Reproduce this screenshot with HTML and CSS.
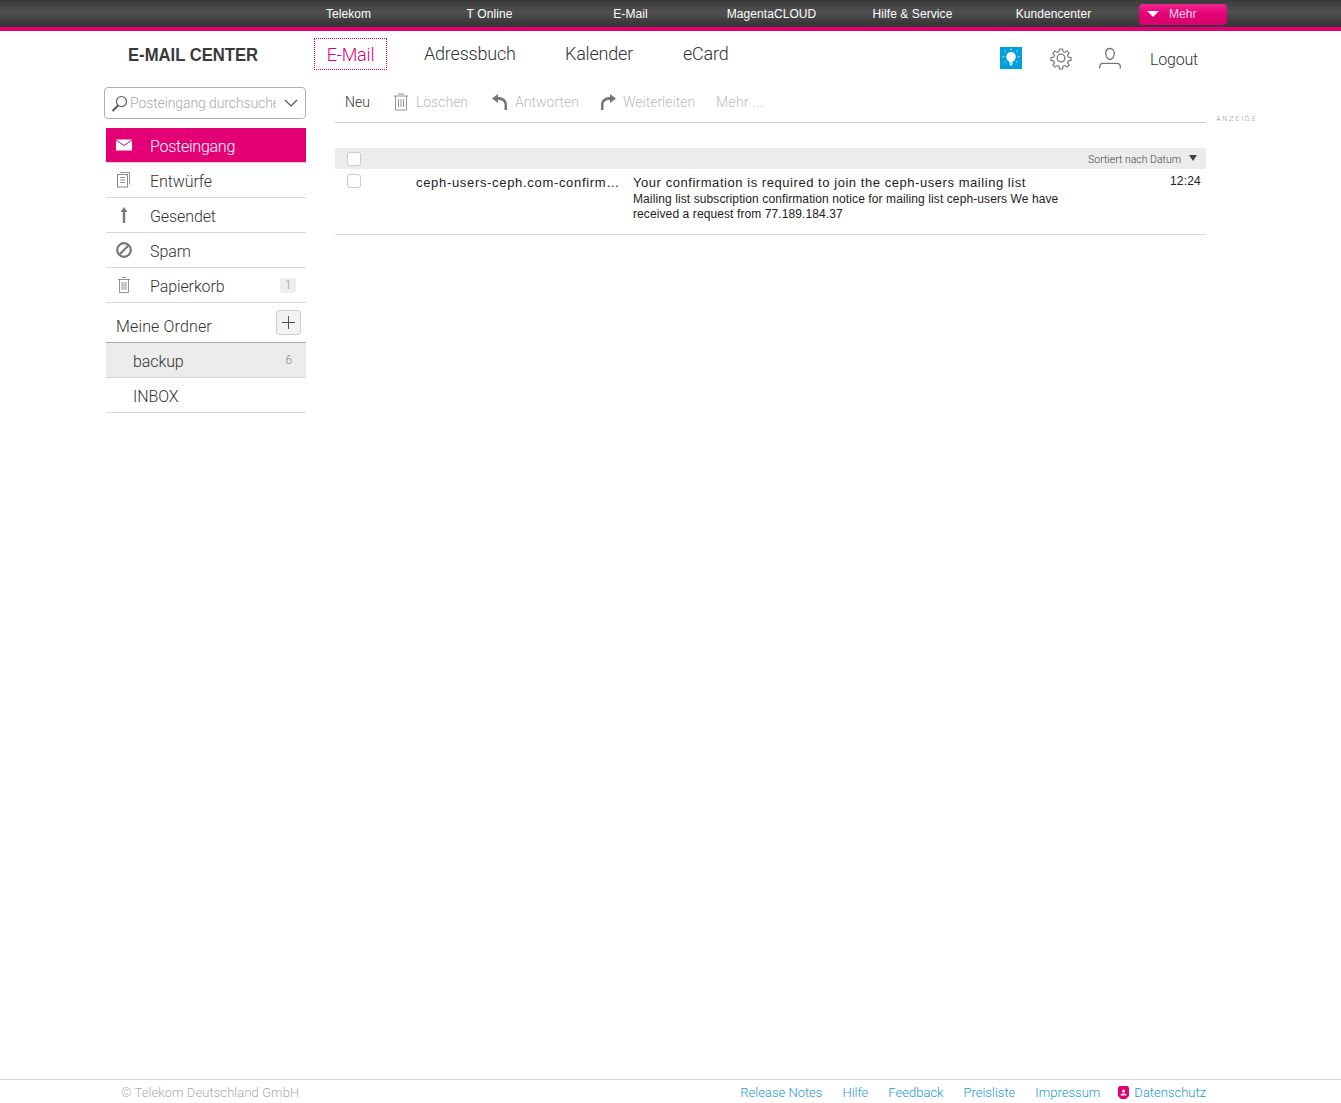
FILE: index.html
```html
<!DOCTYPE html>
<html lang="de">
<head>
  <meta charset="UTF-8" />
  <title>E-Mail Center</title>
  <link rel="stylesheet" href="styles.css">
</head>
<body>
  <div class="topbar">
    <a class="topbar-link">Telekom</a>
    <a class="topbar-link">T Online</a>
    <a class="topbar-link">E-Mail</a>
    <a class="topbar-link">MagentaCLOUD</a>
    <a class="topbar-link">Hilfe &amp; Service</a>
    <a class="topbar-link">Kundencenter</a>
    <a class="more-btn"><span class="more-arrow"></span>Mehr</a>
  </div>

  <div class="header">
    <div class="brand">E-MAIL CENTER</div>
    <nav class="tabs">
      <a class="tab tab-active">E-Mail</a>
      <a class="tab tab-book">Adressbuch</a>
      <a class="tab tab-cal">Kalender</a>
      <a class="tab tab-card">eCard</a>
    </nav>
    <div class="header-tools">
      <span class="tip-icon">
        <svg width="22" height="22" viewBox="0 0 22 22">
          <rect width="22" height="22" fill="#00a0de"/>
          <circle cx="11" cy="9.800" r="4.800" fill="#fff"/>
          <path d="M8.500 13h5l-.8 2.500H9.300z" fill="#fff"/>
          <path d="M9.300 16.200h3.400M9.700 17.400h2.600M10.300 18.600h1.400" stroke="#fff" stroke-width="0.9"/>
          <path d="M11 1.500v1.800M4.500 3.500l1.300 1.300M17.500 3.500l-1.300 1.300M2.500 9.800h1.800M17.700 9.800h1.800M4.700 15.500l1.200-1M17.300 15.500l-1.200-1" stroke="#fff" stroke-width="0.8"/>
        </svg>
      </span>
      <svg class="gear-icon" width="24" height="24" viewBox="0 0 24 24" fill="none" stroke="#777" stroke-width="1.300">
        <circle cx="12" cy="12" r="3.800"/>
        <path d="M10.300 2h3.400l.6 3 1.900.8 2.500-1.700 2.300 2.400-1.700 2.500.8 1.900 3 .6v3.200l-3 .6-.8 1.900 1.700 2.500-2.300 2.400-2.500-1.700-1.900.8-.6 3h-3.400l-.6-3-1.900-.8-2.500 1.700-2.300-2.400 1.700-2.500-.8-1.900-3-.6v-3.200l3-.6.8-1.900-1.700-2.500 2.300-2.400 2.500 1.700 1.900-.8z" transform="translate(1.200 1.200) scale(.9)"/>
      </svg>
      <svg class="user-icon" width="24" height="24" viewBox="0 0 24 24" fill="none" stroke="#777" stroke-width="1.300">
        <path d="M12 2.500c-2.800 0-4.300 2-4.300 4.600 0 3 1.600 6.400 4.300 6.400s4.300-3.400 4.300-6.400c0-2.600-1.500-4.600-4.300-4.600z"/>
        <path d="M1.700 22.500v-2c0-2 1.300-3.200 3.500-3.200h13.600c2.200 0 3.500 1.200 3.500 3.200v2"/>
      </svg>
      <a class="logout">Logout</a>
    </div>
  </div>

  <div class="content">
    <aside class="sidebar">
      <div class="search">
        <svg class="search-icon" width="17" height="17" viewBox="0 0 17 17" fill="none" stroke="#555">
          <circle cx="10.500" cy="6.500" r="5" stroke-width="1.100"/>
          <path d="M7 10.500 1.500 16" stroke-width="1.900"/>
        </svg>
        <input class="search-text" type="text" placeholder="Posteingang durchsuchen" />
        <svg class="search-caret" width="14" height="8" viewBox="0 0 14 8" fill="none" stroke="#555" stroke-width="1.200">
          <path d="M1 1l6 6 6-6"/>
        </svg>
      </div>
      <ul class="folders">
        <li class="folder folder-active">
          <svg class="folder-icon" width="18" height="12" viewBox="0 0 18 12">
            <rect x="1" y="0.500" width="16" height="11" fill="#fff"/>
            <path d="M1 1l8 5.500L17 1" fill="none" stroke="#e20074" stroke-width="1"/>
          </svg>
          Posteingang
        </li>
        <li class="folder">
          <svg class="folder-icon" width="18" height="18" viewBox="0 0 18 18" fill="none" stroke="#888">
            <rect x="2.500" y="3.500" width="10" height="12.500" fill="#fff"/>
            <path d="M5 1.500h9.500v12M5 6.500h5M5 9h5M5 11.500h5" stroke-width="0.900"/>
          </svg>
          Entwürfe
        </li>
        <li class="folder">
          <svg class="folder-icon" width="18" height="18" viewBox="0 0 18 18" fill="#777">
            <path d="M9 1l3.500 5h-2.300v11H7.800V6H5.500z"/>
          </svg>
          Gesendet
        </li>
        <li class="folder">
          <svg class="folder-icon" width="18" height="18" viewBox="0 0 18 18" fill="none" stroke="#777" stroke-width="2.200">
            <circle cx="9" cy="9" r="6.800"/>
            <path d="M4.500 13.500l9-9"/>
          </svg>
          Spam
        </li>
        <li class="folder">
          <svg class="folder-icon" width="18" height="18" viewBox="0 0 18 18" fill="none" stroke="#888" stroke-width="0.900">
            <path d="M3 3.500h12M7 1.500h4M4.500 3.500v13h9v-13M7 6v8M9 6v8M11 6v8"/>
          </svg>
          Papierkorb
          <span class="badge">1</span>
        </li>
      </ul>
      <div class="my-folders">
        Meine Ordner
        <span class="add-btn">
          <svg width="13" height="13" viewBox="0 0 13 13" stroke="#555" stroke-width="1"><path d="M6.500 0v13M0 6.500h13"/></svg>
        </span>
      </div>
      <ul class="folders">
        <li class="folder folder-sub folder-selected">backup<span class="count">6</span></li>
        <li class="folder folder-sub">INBOX</li>
      </ul>
    </aside>

    <main class="mail">
      <div class="toolbar">
        <a class="tool tool-new">Neu</a>
        <a class="tool tool-delete">
          <svg width="16" height="18" viewBox="0 0 16 18" fill="none" stroke="#888" stroke-width="0.900">
            <path d="M1 3h14M5 1h6M2.500 3v14h11V3M5.500 6v8M8 6v8M10.500 6v8"/>
          </svg>
          Löschen
        </a>
        <a class="tool tool-reply">
          <svg width="18" height="18" viewBox="0 0 18 18" fill="#777">
            <path d="M1 5.500 7 1v3c5 0 9 2.500 9 8v5h-2.500v-5c0-3.500-2.500-5-6.500-5v3z"/>
          </svg>
          Antworten
        </a>
        <a class="tool tool-forward">
          <svg width="18" height="18" viewBox="0 0 18 18" fill="#777">
            <path d="M17 5.500 11 1v3C6 4 2 6.500 2 12v5h2.500v-5c0-3.500 2.500-5 6.500-5v3z"/>
          </svg>
          Weiterleiten
        </a>
        <a class="tool tool-more">Mehr ...</a>
      </div>

      <div class="list-head">
        <span class="check"></span>
        <span class="sort">Sortiert nach Datum</span>
        <span class="sort-arrow"></span>
      </div>

      <div class="row">
        <span class="check"></span>
        <div class="sender">ceph-users-ceph.com-confirm…</div>
        <div class="body">
          <div class="subject">Your confirmation is required to join the ceph-users mailing list</div>
          <div class="preview">Mailing list subscription confirmation notice for mailing list ceph-users We have received a request from 77.189.184.37</div>
        </div>
        <div class="time">12:24</div>
      </div>
    </main>

    <aside class="ad">ANZEIGE</aside>
  </div>

  <footer class="footer">
    <span class="copyright">© Telekom Deutschland GmbH</span>
    <div class="footer-links">
      <a>Release Notes</a>
      <a>Hilfe</a>
      <a>Feedback</a>
      <a>Preisliste</a>
      <a>Impressum</a>
      <a class="privacy">
        <svg width="11" height="13" viewBox="0 0 11 13">
          <path d="M0 1.500 1.500 0h8L11 1.500V10l-3 3H3l-3-3z" fill="#e20074"/>
          <circle cx="5.500" cy="5" r="1.500" fill="#fff"/>
          <path d="M2.500 9.500c0-1.500 1-2 3-2s3 .5 3 2z" fill="#fff"/>
        </svg>
        Datenschutz
      </a>
    </div>
  </footer>
</body>
</html>
```

FILE: styles.css
```css
* {
  box-sizing: border-box;
}
body {
  margin: 0;
  height: 100vh;
  display: flex;
  flex-direction: column;
  background: #fff;
  color: #333;
  font-family: Roboto, "Liberation Sans", sans-serif;
  font-weight: 300;
  overflow: hidden;
}
ul {
  list-style: none;
  margin: 0;
  padding: 0;
}

/* top bar */
.topbar {
  height: 31px;
  flex: none;
  display: flex;
  padding-left: 278px;
  background: linear-gradient(#3a3a3a, #505050 45%, #383838 88%);
  border-bottom: 4px solid #e20074;
  color: #fff;
  font-family: "Liberation Sans", sans-serif;
  font-weight: normal;
  font-size: 12px;
  letter-spacing: .08px;
}
.topbar-link {
  width: 141px;
  line-height: 28px;
  text-align: center;
}
.more-btn {
  width: 88px;
  height: 21px;
  margin: 4px 0 0 15px;
  padding-left: 30px;
  position: relative;
  line-height: 20px;
  color: #fdd8ea;
  background: linear-gradient(#f0268c, #e20074 50%, #d8006e);
  border-radius: 4px;
}
.more-arrow {
  position: absolute;
  left: 8px;
  top: 7px;
  border-left: 6px solid transparent;
  border-right: 6px solid transparent;
  border-top: 6px solid #fff;
}

/* header */
.header {
  height: 56px;
  flex: none;
  display: flex;
  align-items: flex-start;
}
.brand {
  width: 186px;
  margin: 14px 0 0 128px;
  font-family: "Liberation Sans", sans-serif;
  font-size: 18px;
  font-weight: bold;
  line-height: 20px;
  color: #3a3a3a;
  transform-origin: left;
  transform: scaleX(.925);
}
.tabs {
  display: flex;
  margin-top: 7px;
  font-size: 18px;
  letter-spacing: -.2px;
  color: #333;
}
.tab {
  height: 32px;
  line-height: 31px;
}
.tab-active {
  width: 73px;
  text-align: center;
  color: #e20074;
  border: 1px dotted #e20074;
}
.tab-book {
  margin-left: 37px;
  width: 141px;
}
.tab-cal {
  width: 118px;
}
.tab-card {
  width: 60px;
}
.header-tools {
  margin-left: 257px;
  margin-top: 15px;
  display: flex;
  align-items: center;
}
.tip-icon {
  display: flex;
  width: 22px;
  height: 22px;
}
.gear-icon {
  margin-left: 27px;
}
.user-icon {
  margin-left: 25px;
}
.logout {
  margin: 2px 0 0 28px;
  font-size: 16px;
  letter-spacing: -.2px;
  color: #333;
}

/* layout */
.content {
  flex: 1;
  display: flex;
  padding-left: 104px;
}
.sidebar {
  width: 202px;
  flex: none;
}
.search {
  height: 32px;
  display: flex;
  align-items: center;
  padding: 0 7px 0 6px;
  border: 1px solid #b0b0b0;
  border-radius: 4px;
}
.search-icon {
  flex: none;
}
.search-text {
  width: 146px;
  margin: 0 8px 0 2px;
  padding: 0;
  border: none;
  outline: none;
  font: inherit;
  font-size: 14px;
  letter-spacing: -.1px;
}
.search-text::placeholder {
  color: #aaa;
}
.search-caret {
  flex: none;
}
.folders {
  margin-left: 2px;
}
.sidebar > .folders:first-of-type {
  margin-top: 9px;
}
.folder {
  height: 35px;
  display: flex;
  align-items: center;
  position: relative;
  padding: 3px 0 0 44px;
  font-size: 16px;
  letter-spacing: -.1px;
  color: #333;
  border-bottom: 1px solid #d8d8d8;
}
.folder-icon {
  position: absolute;
  left: 9px;
  top: 8px;
}
.folder-active {
  background: #e20074;
  color: #fff;
  letter-spacing: -.25px;
}
.folder-active .folder-icon {
  top: 11px;
}
.folder-sub {
  padding-left: 27px;
}
.folder-selected {
  background: #ececec;
  border-top: 1px solid #aaa;
  height: 36px;
}
.badge {
  position: absolute;
  right: 10px;
  top: 10px;
  width: 16px;
  height: 15px;
  text-align: center;
  font-size: 12px;
  line-height: 15px;
  color: #999;
  background: #eee;
  border-radius: 3px;
}
.count {
  position: absolute;
  right: 14px;
  top: 10px;
  font-size: 12px;
  color: #888;
}
.my-folders {
  height: 39px;
  margin-left: 2px;
  padding: 14px 0 0 10px;
  position: relative;
  font-size: 16px;
  letter-spacing: .15px;
  color: #333;
}
.add-btn {
  position: absolute;
  right: 5px;
  top: 7px;
  width: 25px;
  height: 25px;
  display: flex;
  align-items: center;
  justify-content: center;
  background: #f2f2f2;
  border: 1px solid #ccc;
  border-radius: 3px;
}

/* mail list */
.mail {
  width: 871px;
  margin-left: 29px;
  flex: none;
}
.toolbar {
  height: 36px;
  display: flex;
  align-items: center;
  padding: 0 0 6px 10px;
  border-bottom: 1px solid #ccc;
  font-size: 14px;
  color: #bbb;
}
.tool {
  display: flex;
  align-items: center;
  gap: 6px;
  margin-right: 23px;
}
.tool-new {
  color: #333;
}
.tool-delete {
  gap: 7px;
}
.tool-reply {
  margin-right: 20px;
}
.tool-forward {
  margin-right: 21px;
}
.tool-more {
  letter-spacing: .3px;
}
.list-head {
  height: 21px;
  margin-top: 25px;
  display: flex;
  align-items: center;
  padding: 0 9px 0 12px;
  background: #ececec;
  font-size: 10.500px;
  color: #444;
}
.check {
  display: block;
  flex: none;
  width: 14px;
  height: 14px;
  background: #fff;
  border: 1px solid #ccc;
  border-radius: 3px;
}
.sort {
  margin-left: auto;
  padding-top: 1px;
}
.sort-arrow {
  margin-left: 8px;
  margin-bottom: 1px;
  border-left: 4px solid transparent;
  border-right: 4px solid transparent;
  border-top: 6px solid #444;
}
.row {
  height: 66px;
  display: flex;
  padding: 5px 5px 0 12px;
  border-bottom: 1px solid #d8d8d8;
  font-family: "Liberation Sans", sans-serif;
  font-weight: normal;
  color: #222;
}
.sender {
  width: 204px;
  margin-left: 55px;
  padding-top: 1px;
  font-size: 13px;
  letter-spacing: .68px;
  white-space: nowrap;
}
.body {
  width: 440px;
  margin-left: 13px;
  padding-top: 1px;
}
.subject {
  font-size: 13px;
  letter-spacing: .55px;
  line-height: 15px;
}
.preview {
  font-size: 12px;
  letter-spacing: .1px;
  line-height: 15px;
  margin-top: 2px;
}
.time {
  margin-left: auto;
  font-size: 12px;
  letter-spacing: .2px;
  line-height: 15px;
}

/* ad label */
.ad {
  margin: 28px 0 0 10px;
  font-family: "DejaVu Sans", sans-serif;
  font-size: 7px;
  letter-spacing: 1.500px;
  color: #777;
}

/* footer */
.footer {
  height: 24px;
  flex: none;
  display: flex;
  justify-content: space-between;
  padding: 5px 135px 0 121px;
  border-top: 1px solid #d8d8d8;
  font-size: 13px;
}
.copyright {
  color: #aaa;
  letter-spacing: .07px;
}
.footer-links {
  display: flex;
  gap: 20px;
  color: #1c9ad0;
}
.privacy {
  display: flex;
  align-items: center;
  gap: 5px;
  margin-left: -2px;
  height: 15px;
}
```
